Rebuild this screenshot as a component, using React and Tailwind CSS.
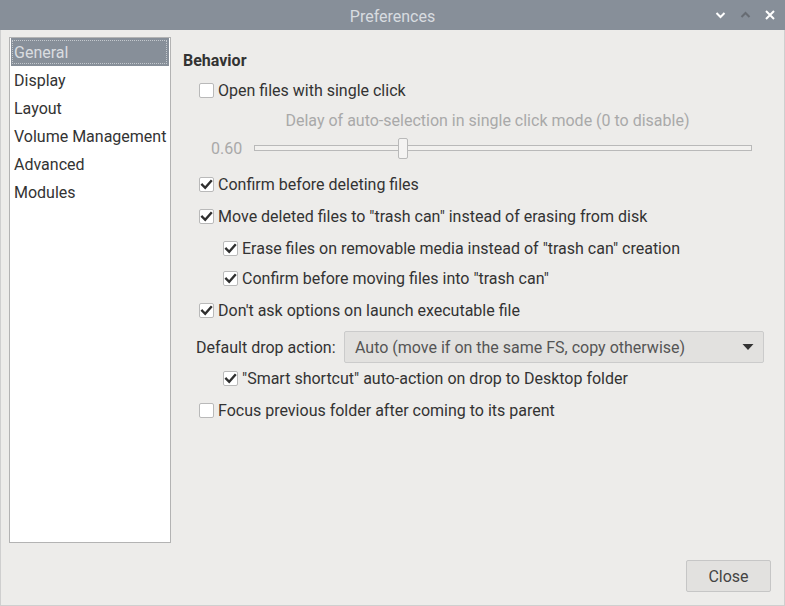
import React from "react";

function Check({ checked }) {
  return (
    <span className="w-[15px] h-[15px] shrink-0 bg-white border border-[#b9b9b9] rounded-[2px] flex items-center justify-center">
      {checked && (
        <svg width="13" height="13" viewBox="0 0 13 13">
          <path d="M2.2 6.8 L5.2 9.8 L11 3.2" fill="none" stroke="#2f2f2f" strokeWidth="2.4" strokeLinecap="square" />
        </svg>
      )}
    </span>
  );
}

function Row({ checked, children, className = "" }) {
  return (
    <div className={"h-[24px] flex items-center gap-[4px] " + className}>
      <Check checked={checked} />
      <span className="whitespace-nowrap pt-px">{children}</span>
    </div>
  );
}

export default function App() {
  const items = ["General", "Display", "Layout", "Volume Management", "Advanced", "Modules"];
  return (
    <div
      className="w-[785px] h-[606px] flex flex-col text-[16px] text-[#333333] overflow-hidden"
      style={{ fontFamily: "Roboto, 'Liberation Sans', sans-serif" }}
    >
      {/* title bar */}
      <div className="h-[30px] shrink-0 bg-[#878f99] flex items-center relative">
        <div className="flex-1 text-center text-[#d8dce0] text-[16px] leading-none pt-[3px]">Preferences</div>
        <div className="absolute right-[10px] top-0 h-[30px] flex items-center gap-[14px]">
          <svg width="11" height="8" viewBox="0 0 11 8">
            <path d="M1.5 2 L5.5 6 L9.5 2" fill="none" stroke="#ffffff" strokeWidth="2" />
          </svg>
          <svg width="11" height="8" viewBox="0 0 11 8">
            <path d="M1.5 6 L5.5 2 L9.5 6" fill="none" stroke="#676c73" strokeWidth="2" />
          </svg>
          <svg width="10" height="10" viewBox="0 0 10 10">
            <path d="M1 1 L9 9 M9 1 L1 9" fill="none" stroke="#ffffff" strokeWidth="2" />
          </svg>
        </div>
      </div>

      {/* body */}
      <div className="flex-1 bg-[#edecea] border-l border-r border-b border-[#cfcfcf] flex flex-col">
        <div className="flex pt-[7px] pl-[8px]">
          {/* list */}
          <div className="w-[162px] h-[506px] shrink-0 bg-white border border-[#b3b3b3] p-px pt-0">
            {items.map((it, i) => (
              <div
                key={it}
                className={
                  "h-[28px] flex items-center pl-[3px] pt-[2px] whitespace-nowrap " +
                  (i === 0 ? "bg-[#878f99] text-[#dadde0]" : "text-[#333333]")
                }
              >
                {i === 0 ? (
                  <div className="w-full h-[24px] -mt-[2px] border border-dotted border-[#c4c9ce] flex items-center -ml-[2px] pl-[1px] pt-[2px]">
                    {it}
                  </div>
                ) : (
                  it
                )}
              </div>
            ))}
          </div>

          {/* right content */}
          <div className="flex-1 ml-[12px] mr-[20px] flex flex-col">
            <div className="h-[24px] mt-[11px] pt-[2px] flex items-center font-bold">Behavior</div>
            <div className="pl-[16px] flex flex-col">
              <Row className="mt-[6px]" checked={false}>Open files with single click</Row>
              <div className="ml-[12px] flex flex-col">
                <div className="h-[24px] mt-[6px] pt-[2px] flex items-center justify-center text-[#a9a9a9] whitespace-nowrap">
                  Delay of auto-selection in single click mode (0 to disable)
                </div>
                <div className="h-[24px] mt-[4px] flex items-center gap-[12px] pr-[12px]">
                  <span className="text-[#a9a9a9] pt-[2px]">0.60</span>
                  <div className="flex-1 h-[6px] border border-[#b9b9b9] bg-[#f2f1ef] relative">
                    <div className="absolute left-[143px] -top-[8px] w-[10px] h-[21px] bg-[#f4f3f2] border border-[#b9b9b9] rounded-[2px]" />
                  </div>
                </div>
              </div>
              <Row className="mt-[12px]" checked>Confirm before deleting files</Row>
              <Row className="mt-[8px]" checked>Move deleted files to "trash can" instead of erasing from disk</Row>
              <div className="pl-[24px] flex flex-col">
                <Row className="mt-[8px]" checked>Erase files on removable media instead of "trash can" creation</Row>
                <Row className="mt-[6px]" checked>Confirm before moving files into "trash can"</Row>
              </div>
              <Row className="mt-[8px]" checked>Don't ask options on launch executable file</Row>
            </div>
            <div className="mt-[9px] h-[32px] flex items-center pl-[13px]">
              <span className="whitespace-nowrap w-[148px] shrink-0 pt-[2px]">Default drop action:</span>
              <div className="flex-1 h-[32px] bg-[#e2e1df] border border-[#cbcbcb] rounded-[2px] flex items-center pl-[10px] pr-[9px] text-[#555555]">
                <span className="flex-1 whitespace-nowrap pt-[2px]">Auto (move if on the same FS, copy otherwise)</span>
                <svg width="12" height="8" viewBox="0 0 12 8">
                  <path d="M0.5 1 L11.5 1 L6 7 Z" fill="#333333" />
                </svg>
              </div>
            </div>
            <div className="pl-[40px] flex flex-col">
              <Row className="mt-[3px]" checked>"Smart shortcut" auto-action on drop to Desktop folder</Row>
            </div>
            <div className="pl-[16px] flex flex-col">
              <Row className="mt-[8px]" checked={false}>Focus previous folder after coming to its parent</Row>
            </div>
          </div>
        </div>

        <div className="mt-[17px] flex justify-end pr-[13px]">
          <button className="w-[85px] h-[32px] pt-[2px] bg-[#e2e1df] border border-[#c6c6c6] rounded-[2px] text-[#444444] text-[16px]">
            Close
          </button>
        </div>
      </div>
    </div>
  );
}
